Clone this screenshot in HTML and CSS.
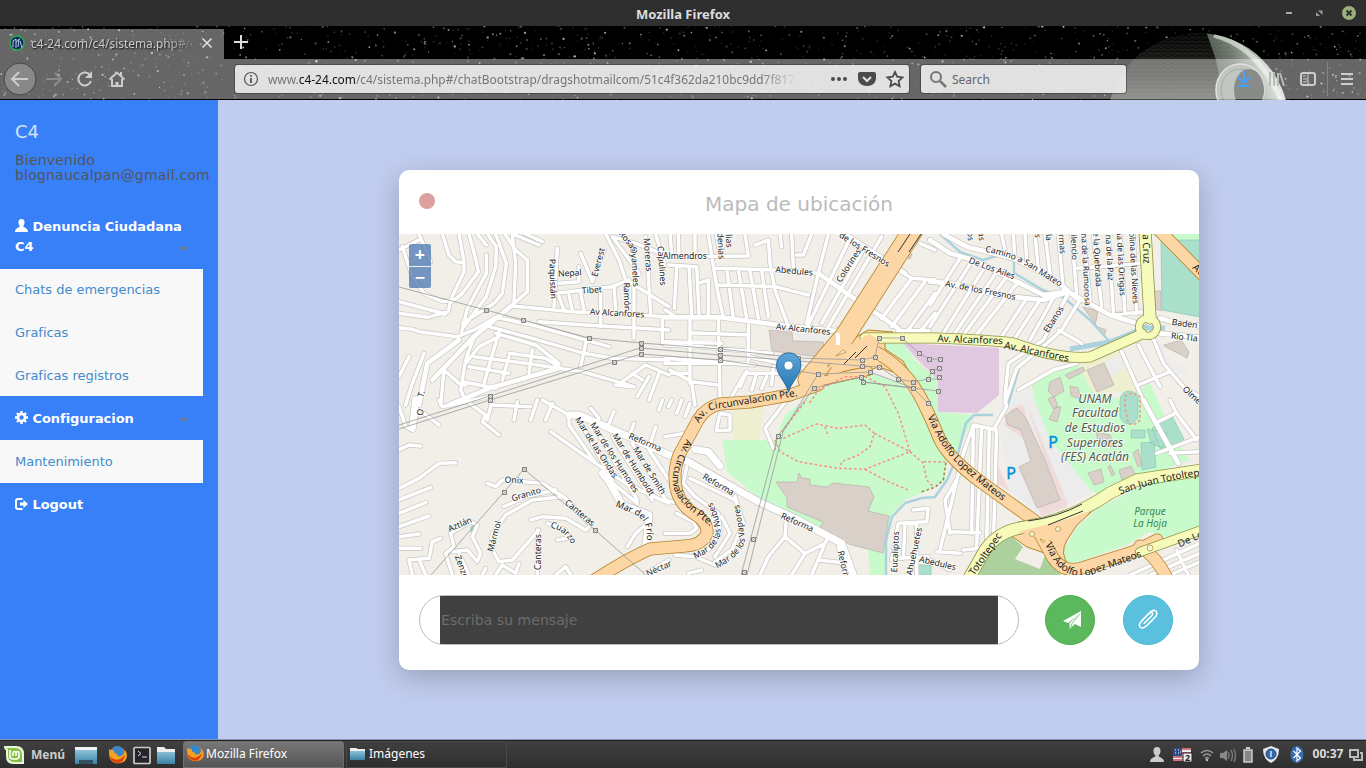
FILE: index.html
```html
<!DOCTYPE html>
<html lang="es">
<head>
<meta charset="utf-8">
<title>Mozilla Firefox</title>
<link rel="stylesheet" href="styles.css">
</head>
<body>
<header class="titlebar">
  <span class="title">Mozilla Firefox</span>
  <svg class="winbtns" width="80" height="26"><path d="M0 13h6" stroke="#aaa" stroke-width="2"/><path d="M32 10.500h4.500v4.500zM34 16h-4v-4z" fill="#999"/><circle cx="63" cy="13" r="7" fill="#9ab07c"/><path d="m60.500 10.500 5 5m0-5-5 5" stroke="#2f2f2f" stroke-width="2"/></svg>
</header>
<section class="chrome">
  <svg class="sky" width="1366" height="74" id="sky">
    <defs>
      <linearGradient id="lit" gradientUnits="userSpaceOnUse" x1="1205" y1="60" x2="1280" y2="30"><stop offset="0" stop-color="#3a3f39"/><stop offset=".45" stop-color="#6f786e"/><stop offset="1" stop-color="#f0f6ee"/></linearGradient>
      <linearGradient id="dark" gradientUnits="userSpaceOnUse" x1="0" y1="8" x2="0" y2="74"><stop stop-color="#060606"/><stop offset=".6" stop-color="#22241f"/><stop offset="1" stop-color="#474b44"/></linearGradient>
      <pattern id="panel" width="7" height="4" patternUnits="userSpaceOnUse"><path d="M0 3.500h5M6 0v2" stroke="#b6beb4" stroke-opacity=".1" stroke-width="1"/></pattern>
      <clipPath id="sphere"><circle cx="1198" cy="98" r="91"/></clipPath>
    </defs>
    <rect width="1366" height="74"/>
    <g id="stars" fill="#fff"></g>
    <g clip-path="url(#sphere)">
      <path d="M1107 0h190v74h-190z" fill="url(#dark)"/>
      <path d="M1204 0q8 22 12 34l8 40h70V0z" fill="url(#lit)"/>
      <path d="M1107 0h190v74h-190z" fill="url(#panel)"/>
      <path d="M1214 9q46 12 69 70" fill="none" stroke="#eef5ec" stroke-width="5" opacity=".6"/>
    </g>
    <ellipse cx="1240" cy="64" rx="24" ry="26" fill="#9aa198" stroke="#c8cec6" stroke-width="1.500"/>
    <ellipse cx="1240" cy="64" rx="19" ry="21" fill="none" stroke="#6c726b"/>
    <ellipse cx="1249" cy="64" rx="15" ry="21" fill="#3b3e39"/>
  </svg>
  <div class="tabs">
    <div class="tab">
      <svg width="16" height="16"><circle cx="8" cy="8" r="7" fill="#12275a" stroke="#22b04c" stroke-width="1.500"/><path d="M4 12V6l3-2v9m2-1 1-8m1 2 2 7M7 7l4-3" stroke="#b6d4ee" fill="none" stroke-width="1"/></svg>
      <span class="tabtext">c4-24.com/c4/sistema.php#/chat</span>
      <svg width="12" height="12"><path d="m1.500 1.500 9 9m0-9-9 9" stroke="#ddd" stroke-width="1.700"/></svg>
    </div>
    <svg class="plus" width="16" height="16"><path d="M8 1v14M1 8h14" stroke="#ddd" stroke-width="2"/></svg>
  </div>
  <div class="nav">
    <svg class="navicons" width="235" height="40" fill="none" stroke="#ccc" stroke-width="2">
      <circle cx="20" cy="20" r="16" fill="#888" stroke="#454545" stroke-width="1"/>
      <path d="M28 20H13m6-7-7 7 7 7"/>
      <path d="M46 20h14m-5-6 6 6-6 6" stroke="#8b8b8b"/>
      <path d="M90 16a6.500 6.500 0 1 0 1 6" /><path d="M92 12v7h-7z" fill="#ccc" stroke="none"/>
      <path d="m109.500 20.500 7.500-7 7.500 7M112 20v7h10v-7M121 17v-4"/><path d="M117 28v-5" stroke-width="3"/>
    </svg>
    <div class="url">
      <svg width="16" height="16" fill="none" stroke="#555"><circle cx="8" cy="8" r="6.500" stroke-width="1.200"/><path d="M8 7v5M8 4v1.800" stroke-width="1.800"/></svg>
      <span class="address">www.<b>c4-24.com</b>/c4/sistema.php#/chatBootstrap/dragshotmailcom/51c4f362da210bc9dd7f817a</span>
      <svg class="urlicons" width="74" height="18"><g fill="#4b4b4b"><circle cx="3" cy="9" r="2"/><circle cx="9" cy="9" r="2"/><circle cx="15" cy="9" r="2"/><path d="M30 2h14q2 0 2 2v4c0 5-4 8-9 8s-9-3-9-8V4q0-2 2-2"/></g><path d="m33 7 4 4 4-4" fill="none" stroke="#e2e2e2" stroke-width="2"/><path d="m65 2 2.200 4.700 5.300.7-3.900 3.600 1 5.200-4.600-2.600-4.600 2.600 1-5.200-3.900-3.600 5.300-.7z" fill="none" stroke="#4b4b4b" stroke-width="1.800"/></svg>
    </div>
    <div class="search">
      <svg width="18" height="18" fill="none" stroke="#777" stroke-width="2"><circle cx="7" cy="7" r="5"/><path d="m11 11 6 6" stroke-width="2.500"/></svg><span>Search</span>
    </div>
    <svg class="tools" width="140" height="40" fill="none" stroke="#ccc" stroke-width="2">
      <path d="M18 12v12m-6-6 6 6 6-6M12 27h12" stroke="#45a1ff"/>
      <path d="M44 13v14M48 13v14M52 14v13M54 14l4 13" stroke="#b9b9b9"/>
      <rect x="75" y="14" width="14" height="12" rx="2"/><path d="M82 14v12M77 17h3m-3 3h3m-3 3h3" stroke-width="1"/>
      <path d="M101.500 3v34" stroke="#858585" stroke-width="1"/>
      <path d="M115 15h12m-12 5h12m-12 5h12"/>
    </svg>
  </div>
</section>

<main class="page">
  <aside class="sidebar">
    <div class="brand">C4</div>
    <div class="welcome">Bienvenido<br>blognaucalpan@gmail.com</div>
    <nav class="menu">
      <a class="head tall"><svg width="13" height="13" viewBox="0 0 13 13"><path d="M6.500 0C9 0 9.800 2 9.500 4c-.2 1.600-1 2.500-1.200 3 0 2 4.700 1.500 4.700 6H0c0-4.500 4.700-4 4.700-6C4.500 6.500 3.700 5.600 3.500 4 3.200 2 4 0 6.500 0" fill="#fff"/></svg> Denuncia Ciudadana C4<i class="caret"></i></a>
      <a class="item">Chats de emergencias</a>
      <a class="item">Graficas</a>
      <a class="item last">Graficas registros</a>
      <a class="head"><svg width="13" height="13" viewBox="0 0 13 13"><circle cx="6.500" cy="6.500" r="3.500" fill="none" stroke="#fff" stroke-width="2.600"/><path d="M6.500 0v2m0 9v2M0 6.500h2m9 0h2M2 2l1.300 1.300m6.400 6.400L11 11M2 11l1.300-1.300m6.400-6.400L11 2" stroke="#fff" stroke-width="2.400"/></svg> Configuracion<i class="caret"></i></a>
      <a class="item">Mantenimiento</a>
      <a class="head"><svg width="13" height="12" viewBox="0 0 13 12"><path d="M7.500 1H3Q1 1 1 3v6q0 2 2 2h4.500" fill="none" stroke="#fff" stroke-width="2"/><path d="M5 4.500h3.500V2L13 6l-4.500 4V7.500H5z" fill="#fff"/></svg> Logout</a>
    </nav>
  </aside>
  <section class="content">
    <div class="card">
      <div class="cardhead"><span class="dot"></span><h1>Mapa de ubicación</h1></div>
      <div class="mapbox">
      <svg class="map" width="800" height="341" viewBox="399 234 800 341">
        <defs>
          <g id="streets">
            <g transform="translate(399 230) scale(.33333)">
              <path d="M0 60 60 30M10 50 40 140 75 190 130 215 160 212M60 12 95 95M130 12 150 75 170 95 195 98M180 12 195 95V125L155 210 148 245 85 262 0 250M0 215 140 252M210 12 232 95 238 125 190 190 160 215M235 12 262 45M262 75V130L235 180 205 235 188 305M265 12 292 50 290 110 262 200 195 290M290 12 322 100 310 190 285 220 190 280M318 12 350 60 385 90V185L340 225M340 15 350 100 345 215M340 12 420 45M380 12 430 35M340 228 520 245 810 260M420 275 560 285 810 300M0 293 40 298 60 305 175 320 225 300 290 262M290 262 400 285 630 350M270 290 400 325 555 370 640 385 810 390M290 310 410 345 480 400M225 380 380 400 550 425 705 470M560 340 545 410M300 305 255 460M330 380 310 450M75 370 40 460 20 525M30 380 0 440M225 320 200 390 185 480 195 500M210 410 330 430M190 455 290 475M300 320 240 350 200 400M400 360 390 430M135 420 180 460 200 465M135 420 125 525M330 370 440 385 480 410"/>
              <path d="M475 55 465 230M480 160 540 155V110M545 70 580 155 615 60M470 190 640 170 690 150M620 12 660 90 680 150 730 180 810 230M640 20 720 130M705 160V325M740 20 755 250M770 12 790 80M790 260V340M645 170 650 240M605 180V290M480 200 495 240M510 195 520 240M545 190 555 240M640 20 710 40 810 80M670 455 740 405 810 435M715 500 750 440M700 430 730 450M750 510 780 430M650 465 700 470"/>
              <path class="avenue" d="M150 525 270 475 480 415M340 225 225 320 100 450M180 330 85 400 60 525"/>
            </g>
            <g transform="translate(665 230) scale(.33333)">
              <path d="M10 105 95 110M35 115 28 235M72 110 80 255M95 110 102 250M100 160 130 150V255M15 12 20 70M40 12 42 80M90 12V75M0 80 250 78 240 12M130 12 145 110 160 195 175 262M155 12 165 75M150 115 340 120 460 130M155 165 330 170 430 195M185 115 205 265M220 120 245 265M255 125 280 265M290 120 310 260M270 45 310 30 315 100 330 180 370 290M345 12 350 50M380 15 385 110M395 75H415L440 12M75 265V460M160 265 165 500M250 285V390M0 335 170 340M75 308 250 315M0 345 100 350 320 370M0 385 270 405M250 380 440 420M0 240 30 258M490 12 460 130 425 280M555 25 430 285M600 50 470 280M650 20 490 290M700 120 740 145 810 150M740 145 650 265M780 155 680 290M810 190 730 300M810 250 765 305M765 40 810 60M240 430H360L440 440M225 470 245 425M260 480 275 430M290 475 305 440M325 410 320 465M15 420 80 455 160 465M20 430H75M200 500 240 430M0 400 250 400M80 460 90 525"/>
              <path class="avenue" d="M0 262H170L340 285 530 305M460 130 560 200 700 295M540 12 720 130M520 300V345M700 303H790"/>
            </g>
            <g transform="translate(930 230) scale(.33333)">
              <path d="M90 85 0 225M125 95 0 290M165 110 40 310M200 125 75 310M230 140 100 315M265 155 135 320M290 205 215 320M330 210 255 325M375 195 300 330M415 190 340 330 235 400 225 500M385 300 455 340M215 12 225 60M250 12 255 90M285 12 290 90M315 12 325 120M345 12 360 130M385 12 400 180M425 12 440 195M460 12 480 210M490 12 515 230M535 12 550 245M570 12 585 250M610 12 620 250M440 115 630 100M540 255 645 245M575 365 635 500M625 345 690 470M670 325 700 400 760 470 810 500M625 465 720 425M265 480 370 420 440 400M450 210 395 300 345 345 260 415 225 520"/>
              <path class="avenue" d="M0 30 60 70 130 90 260 155 340 195 415 185 450 205 540 255 620 280M0 155 60 160 200 195 340 210 415 185M40 12 110 50 250 85 340 130 400 170 440 205M690 265 740 280 810 287M690 310 810 322"/>
            </g>
            <g transform="translate(399 400) scale(.33333)">
              <path class="wide" d="M50 0 40 85M510 45 540 45 690 110 810 165M610 220 630 245 670 315 750 345 745 400 740 435"/>
              <path d="M75 40 120 75M0 20 20 80 40 90M120 0 130 20 270-10M205 5 260 45 250 65 300 105M275 15 395 20M280 0 265 60M355 5 345 60M415 0 395 60M460 10 440 60M430 0 510 45 510 75 590 190M455 95 590 190 680 250 810 310M540 60 640 240M585 80 715 300M640 110 760 300M700 130 800 300M750 150 810 240M630 240 715 310M600 55 575 25M630 70 645 35M690 110 705 70M770 80 755 130M780 30 790 0M0 150 30 135 65 138M0 265 60 235 120 190 170 188M0 300 95 262M0 340 80 308M0 380 90 348M0 410 60 402M0 445H65M265 250 290 260 310 240 430 250 500 295 575 375 560 390 500 355 430 350 395 360M315 320 380 290 470 270M490 290 400 300 320 345 280 400 275 440 300 485 340 480 420 390M415 390V525M445 370 500 390 505 415 475 420M155 400 165 440 140 460 160 525M155 400 215 365 235 375 220 410 245 460 235 485 205 450 160 455M180 460 210 525M40 525 30 480 90 475 100 425 125 415M60 478 80 525M685 440 710 400 745 370M250 525 260 505M290 525 310 495 350 520 360 490M470 525 500 500 515 525M740 520 810 480"/>
            </g>
            <g transform="translate(665 400) scale(.33333)">
              <path class="wide" d="M0 160 70 185 280 305 390 355 530 430 565 525M90 148 130 155 165 198"/>
              <path d="M10 20 20 0M35 40 50 0M60 50 75 10M155 85 165 40 195 45V90L155 92M0 110 60 100 75 120M365 0 300 85 325 145M65 200 55 250 90 290 160 340 165 400 130 450M75 235 210 300 225 330M210 290 235 370 200 450 150 485M170 350 195 400 150 470M35 340 85 365 95 385 75 400H0M0 300 40 310M30 465 90 470 150 495M70 520 110 510M365 345 360 410 420 460 480 430 490 410M360 410 310 470 285 525M420 460 380 525M480 430 440 525M460 480 550 490M520 440 540 525M745 330 790 325 785 365 700 370 680 480M720 370 715 475M755 370V525M700 475 790 470"/>
            </g>
            <g transform="translate(930 400) scale(.33333)">
              <path d="M130 75 100 160 30 450M130 75 200 90 190 440 100 450M155 80 140 440M178 85 170 430M130 85 125 400M60 395 150 398M80 240 45 300 60 400M20 455 90 460M190 90 230 20 225 0M685 65 735 40M680 160 810 110M720 160 810 155M720 0 740 40 800 120M600 525 810 430M660 525 810 460M720 525 810 485M740 450 775 525M0 480 60 510"/>
              <path class="avenue" d="M640 0 745 190"/>
            </g>
          </g>
          <g id="orange">
            <path class="w13" d="M818 385 790 395 750 402 720 404Q706 407 698 420L679 455Q672 475 677 492 682 507 696 515 708 523 707 533 703 545 685 546L650 549Q625 560 590 583"/>
            <path class="w21" d="M913 230 845 336 808 380"/>
            <path class="w10" d="M812 383 868 371"/>
            <path class="w13" d="M872 350Q905 367 922 400 932 420 940 440 950 460 985 485L1035 521"/>
            <path class="w13" d="M1035 525 1053 558Q1065 575 1085 567L1133 552 1157 540M1140 546Q1160 560 1170 585M1157 228 1205 277"/>
          </g>
          <g id="yellow">
            <path class="w11" d="M865 338 935 338Q990 340 1013 343 1060 360 1090 357L1142 334"/>
            <path class="w13" d="M1145 230 1150 318"/><circle class="w8" cx="1148" cy="327" r="9"/>
            <path class="w13" d="M967 582 985 550Q998 532 1020 528L1045 523Q1080 514 1110 493L1137 480 1202 470"/>
            <path class="w10" d="M1140 552 1202 530"/>
          </g>
          <path id="camino" d="M973 250Q1008 254 1030 268T1070 293"/>
          <path id="circ1" d="M697 428Q705 408 722 408L810 394"/>
          <path id="circ2" d="M691 431C676 458 666 480 678 497S702 516 716 533"/>
          <path id="via1" d="M925 411Q937 440 950 456 970 478 1010 506"/>
          <path id="via2" d="M1042 534C1052 570 1070 582 1096 573L1152 553"/>
          <path id="juan" d="M1110 499Q1145 482 1215 474"/>
          <path id="frio" d="M612 505 634 514Q650 521 646 544"/>
          <path id="nubes" d="M690 561Q724 548 720 526 718 512 709 497"/>
          <path id="vapores" d="M712 571Q744 556 745 538L738 499"/>
          <path id="cuarzo" d="M542 527Q566 526 575 552"/>
        </defs>
        <rect x="399" y="234" width="800" height="341" fill="#f2efe9"/>
        <path fill="#c8facc" d="M722 440 775 440 785 415 812 395 838 377 870 373 900 383 920 405 932 435 947 460 945 480 925 492 905 500 893 512 888 530 885 575H870L868 550 850 545 820 528 795 515 758 497 727 472zM885 343H903L915 360 938 380 940 412 975 415 965 435 955 455 945 445 930 405 905 372 884 355zM1031 382 1077 363 1090 388 1120 400 1150 383 1175 440 1190 460 1140 478 1100 495 1090 490 1050 440 1040 425z"/>
        <path fill="#c8facc" d="m1062 553 15-26 20-18 47-24 55-12v53l-23 14-27-8-20 12-57 20q-13 1-10-11M1150 234h50v27z"/>
        <path fill="#e0c9e0" d="M903 343 999 348V395L977 413 938 412V380L915 357z"/>
        <path fill="#eeeed0" d="M733 406h31l-5 34h-26zM1077 363l45-12 15 40-43 3z"/>
        <path fill="#ececec" d="m1000 430 14-32 16-10 20 52 42 52-48 26-34-28zM1105 361l15-6 5 13-15 8zM795 332l42 2-12 14-28-3zM1160 340l12 28 14-4 2 8-10 3-21-25z"/>
        <path fill="#f1dada" d="m1004 425 6-16 12-5 4 8-4 26zM998 465l12 27-12-8zM1038 505l24-6 5 8-26 10zM1026 404l6 12 36 88-6 2z"/>
        <path fill="#add19e" d="m993 543 17-8 13 12-8 12 25 10 5-14 18 22h-85z"/>
        <g fill="#d9d0c9" stroke="#bcb0a7" stroke-width=".7">
          <path d="M776 482h21l2-9 3 5 8 1v6l17 2 6-4 36 4 5 10-6 14 21 5-6 37-34-9-30-15 4-7-36-15v-9zM769 330l23 2 1 9 30 1 4 16-55-7zM1005 416l12-8 9 10 19 42 15 40-23 8-18-41 12-6-10-31-13-5zM1087 370l17-7 10 22-17 7zM1083 307l15 4-3 15 11 4-2 6zM1164 345l17-5 8 12-2 6-23-12z"/>
          <path d="m1050 382 10-5 4 14-10 6-6-6zM1065 375l18-8 2 4-16 8zM1070 386l8 2 3 11-10-3zM1048 399l6-3 4 11-5 2zM1088 473l13-4 3 13-10 3zM1096 432l14 3 4 12-15-2zM1119 470l12-4 5 10-14 4zM1133 453l5-4 4 16-4 2zM905 250l7 4-2 5-6-3zM1152 291h9v20l-7-3zM1056 407h5l-4 15-8-3zM1110 465l5 9-3 2-4-9z"/>
        </g>
        <g fill="#aae0cb" stroke="#88c9af" stroke-width=".7"><path d="M1161 240h39v77l-38-7zM1152 428l20-12 12 23-22 14zM1131 430l14 0 0 8-14 0zM1141 443l13-1 2 25-14 3zM1147 429l20 4-4 15-12-4zM917 565h14v10h-14zM471 527l3-3 2 2-5 6z"/><rect x="1120" y="391" width="18" height="33" rx="9"/></g>
        <g fill="none" stroke="#aad3df">
          <path stroke-width="2.500" d="M940 234 960 252 983 260 1000 255 1014 257V273L1043 290 1063 297 1090 320 1110 342 1147 325M886 575V540L892 517 905 503 922 498 935 497 947 480 957 457 966 423 974 415 993 415M1020 365 1008 405"/>
          <path stroke-width="5" d="M1070 349 1110 342 1130 334 1145 328H1165"/>
        </g>
        <use href="#streets" class="road street-case"/>
        <use href="#streets" class="road street-fill"/>
        <path fill="#fcd6a4" stroke="#b5852c" stroke-width="1" d="m836 350 22-14 10-6 25 2-8 8v9l18 12 10 18-34-12-52 16-15 3z"/>
        <path fill="#fcd6a4" stroke="#b5852c" stroke-width="1" d="m1010 535 60-17 29-13-22 20-10 15q-8 14 2 25l-22-11-20-7z"/>
        <use href="#orange" class="road orange-case"/><use href="#orange" class="road orange-fill"/>
        <use href="#yellow" class="road yellow-case"/><use href="#yellow" class="road yellow-fill"/>
        <path fill="#fcd6a4" d="m838 352 22-13 9-5 10 6-1 12 14 10-26-3-39 20zM1018 532l50-13 24-9-20 17-12 15-20-4z"/>
        <g fill="none" stroke="#333"><path d="m856 352-12 12M867 346l-12 12M1028 521q30-4 54-17M1048 525l35-14M910 234l-12 18M921 234l-12 18"/></g>
        <g fill="#eff5d5" stroke="#b5852c" stroke-width=".7"><circle cx="1032" cy="534" r="2.500"/><circle cx="1058" cy="529" r="2.500"/><circle cx="1150" cy="548" r="3"/><path d="m836 356 7-6 3 2zM1043 543l-3-4 5 2zM827 366l3-3-1 4z"/></g>
        <path d="M838 333v12" stroke="#fff" stroke-width="4"/>
        <g transform="translate(665 400) scale(.33333)" fill="none" stroke="#fa8f80" stroke-width="4.500" stroke-dasharray="8 7">
          <path d="M355 115 400 95 455 72 520 85 600 75 628 100 615 140 580 165 530 185 525 205 600 208 735 155M330 120 345 155 400 185 520 205M600 208 670 245 730 270M628 100 735 155 700 40 680 0 660-40 600-70 540-70 460-30 430 15M735 155 775 190 785 240 805 260M775 185H840M480 80 490 110M330 150 335 115 425 0"/>
          <path stroke="#9a8740" d="M770 275 810 262 835 240 843 185"/><path d="M1380 20V-10Q1400-30 1425-10V60Q1410 80 1390 70z"/>
        </g>
        <g class="power">
          <path d="M399 287 486 310 523 320 589 338 641 343 720 349 798 358 862 360 875 357 879 338H902L919 353 929 359H940M641 348 720 355 862 366 879 367 898 379 913 382 928 379 932 371 939 368M641 354 720 360 818 374 870 372 913 388 928 403M640 348 490 396 399 425M614 362 490 400 399 429M641 354 614 362M818 374 783 432 747 575M814 388 778 436 741 575M814 388 861 377 863 382 913 388M863 382 938 391M928 379H939M431 575 504 492 524 469 595 530 646 575"/>
        </g>
        <g fill="none" stroke="#777" stroke-width=".9" id="towers"></g>
        <g class="lbl">
          <text transform="translate(570 276) rotate(-4)">Nepal</text><text transform="translate(550 279) rotate(88)">Paquistán</text><text transform="translate(601 263) rotate(-75)">Everest</text><text transform="translate(592 293) rotate(-4)">Tibet</text><text transform="translate(624 297) rotate(88)">Ramón</text><text transform="translate(617 316) rotate(3)">Av Alcanfores</text><text transform="translate(632 267) rotate(86)">Oyameles</text><text transform="translate(626 243) rotate(50)">Rosas</text><text transform="translate(645 255) rotate(86)">Moreras</text><text transform="translate(659 266) rotate(86)">Capulines</text>
          <text transform="translate(424 395) rotate(-70)">T.</text><text transform="translate(423 413) rotate(-75)">O</text>
          <text x="685" y="259">Almendros</text><text transform="translate(718 246) rotate(87)">denias</text><text transform="translate(726 241) rotate(87)">lias</text><text transform="translate(794 274) rotate(5)">Abedules</text><text transform="translate(851 267) rotate(-57)">Colorines</text><text transform="translate(863 252) rotate(32)">de los Fresnos</text><text transform="translate(803 332) rotate(6)">Av Alcanfores</text>
          <text transform="translate(991 271) rotate(20)">De Los Ailes</text><text transform="translate(980 293) rotate(11)">Av. de los Fresnos</text><text transform="translate(1056 321) rotate(-57)">Ebanos</text>
          <g class="end"><text transform="translate(968 241) rotate(87)">os</text><text transform="translate(979 241) rotate(87)">as</text><text transform="translate(1035 238) rotate(87)">s</text><text transform="translate(1046 241) rotate(87)">la</text><text transform="translate(1060 254) rotate(86)">rmas</text><text transform="translate(1072 260) rotate(87)">ilencio</text><text transform="translate(1085 306) rotate(87)">ina de la Rumorosa</text><text transform="translate(1096 287) rotate(87)">e la Quebrada</text><text transform="translate(1108 281) rotate(87)">na de la Paz</text><text transform="translate(1120 296) rotate(87)">na de las Ortigas</text><text transform="translate(1133 304) rotate(87)">olina de las Nieves</text></g>
          <text transform="translate(1188 327) rotate(8)">Baden P</text><text transform="translate(1184 340) rotate(6)">Rio Tla</text><text transform="translate(1192 399) rotate(42)">Olmed</text>
          <text><textPath href="#camino" startOffset="50%">Camino a San Mateo</textPath></text>
          <text transform="translate(514 483) rotate(3)">Onix</text><text transform="translate(527 497) rotate(-17)">Granito</text><text transform="translate(578 515) rotate(40)">Canteras</text><text transform="translate(461 527) rotate(-23)">Aztlán</text><text transform="translate(497 537) rotate(-75)">Mármol</text><text transform="translate(541 552) rotate(-90)">Canteras</text><text transform="translate(459 568) rotate(70)">Zenzo</text><text><textPath href="#cuarzo" startOffset="50%">Cuarzo</textPath></text>
          <text transform="translate(594 449) rotate(57)">Mar de las Ondas</text><text transform="translate(612 459) rotate(57)">Mar de los Humores</text><text transform="translate(631 466) rotate(58)">Mar de Humboldt</text><text transform="translate(647 472) rotate(58)">Mar de Smith</text><text transform="translate(644 445) rotate(23)">Reforma</text><text transform="translate(717 487) rotate(30)">Reforma</text><text transform="translate(796 525) rotate(24)">Reforma</text><text transform="translate(841 566) rotate(77)">Reform</text><text transform="translate(660 571) rotate(-24)">Néctar</text>
          <text class="mid"><textPath href="#frio" startOffset="50%">Mar del Frío</textPath></text><text><textPath href="#nubes" startOffset="50%">Mar de las Nubes</textPath></text><text><textPath href="#vapores" startOffset="50%">Mar de los Vapores</textPath></text>
          <text transform="translate(898 552) rotate(-87)">Eucaliptos</text><text transform="translate(917 552) rotate(-78)">Ahuehuetes</text><text transform="translate(937 566) rotate(13)">Abedules</text>
          <g class="big"><text transform="translate(970 343) rotate(2)">Av. Alcanfores</text><text transform="translate(1036 355) rotate(12)">Av. Alcanfores</text><text transform="translate(1143 249) rotate(88)">a Cruz</text><text><textPath href="#circ1" startOffset="47%">Av. Circunvalacion Pte.</textPath></text><text><textPath href="#circ2" startOffset="50%">Av. Circunvalacion Pte.</textPath></text><text><textPath href="#via1" startOffset="49%">Vía Adolfo Lopez Mateos</textPath></text><text><textPath href="#via2" startOffset="50%">Vía Adolfo Lopez Mateos</textPath></text><text><textPath href="#juan" startOffset="53%">San Juan Totoltepec</textPath></text><text transform="translate(988 556) rotate(-55)">Totoltepec</text><text transform="translate(1194 541) rotate(-24)">De Los</text><text transform="translate(1196 272) rotate(42)">Av</text></g>
          <g class="campus"><text x="1095" y="403">UNAM</text><text x="1095" y="417">Facultad</text><text x="1095" y="432">de Estudios</text><text x="1095" y="447">Superiores</text><text x="1095" y="461">(FES) Acatlán</text></g>
          <g class="park"><text x="1150" y="515">Parque</text><text x="1150" y="527">La Hoja</text></g>
          <g class="parking"><text x="1053" y="448">P</text><text x="1011" y="479">P</text></g>
        </g>
        <defs><linearGradient id="pin" x2="0" y2="1"><stop stop-color="#5da7dc"/><stop offset="1" stop-color="#2673ae"/></linearGradient></defs>
        <path d="M788.500 392C786 382 776.500 375 776.500 365a12.200 12.200 0 0 1 24.500 0C801 375 791 382 788.500 392" fill="url(#pin)" stroke="#2e6c97" stroke-width="1"/><circle cx="788.500" cy="365.500" r="4.500" fill="#fff" stroke="#2e6c97" stroke-width=".6"/>
      </svg>
      <div class="zoom"><span>+</span><span>−</span></div>
      </div>
      <div class="compose">
        <div class="msg"><span>Escriba su mensaje</span></div>
        <div class="btn send"><svg width="18" height="18" viewBox="0 0 18 18"><path d="M18 0v16l-6-3-5.500 5v-6L15 4 5 12l-5-2z" fill="#fff"/><path d="m7.500 16.500 1.500-4 8-10" fill="none" stroke="#5cb85c" stroke-width=".8"/></svg></div>
        <div class="btn clip"><svg width="22" height="22" viewBox="0 0 22 22"><path d="m7 15 7.500-7.500q2-2 .7-3.200-1.400-1-3 .7L4.500 12.700q-3.600 3.500-1.200 6 2.500 2.200 6-1.200l8.700-8.700q3.300-3.600 1-6-2.500-2.300-6 1L5 11.700M9.500 17.500l6-6" transform="translate(0 -.5)" fill="none" stroke="#fff" stroke-width="1.500" stroke-linecap="round"/></svg></div>
      </div>
    </div>
  </section>
</main>

<footer class="taskbar">
  <svg class="launch" width="182" height="28">
    <defs><linearGradient id="fold" x2="0" y2="1"><stop stop-color="#9ed0e5"/><stop offset="1" stop-color="#3c83a7"/></linearGradient><g id="ff"><circle cx="8.500" cy="9" r="8.500" fill="#ef7a13"/><circle cx="8.500" cy="6.500" r="6.500" fill="#3a86cc"/><path d="M0 3q3 2 5 1-1 3 3 4 0 3 4 2 3-1 4-6 4 6 0 11-6 4-11 0-5-4-5-12" fill="#f4a321"/><path d="M1 10q7 8 15-1-1 7-7 8-6 0-8-7" fill="#d9440e"/></g></defs>
    <path d="M4 5h12q8 0 8 8v10H13q-7 0-7-8V9q-2 0-2-4" fill="#e9f5dc"/><path d="M6 7h9q7 0 7 7v7h-8q-6 0-6-7V8z" fill="#84c044"/><path d="M10 9v6q0 3 3 3h3q3 0 3-3v-3q0-1.500-1.500-1.500T16 12v3m0-3q0-1.500-1.500-1.500T13 12v3" fill="none" stroke="#fff" stroke-width="1.600"/>
    <rect x="75" y="6" width="22" height="17" fill="url(#fold)"/><path d="M75 6h22v3H75z" fill="#f2f2f2"/><path d="M79 19h14v4H79z" fill="#31525f"/>
    <use href="#ff" x="109" y="5"/>
    <rect x="134" y="6.500" width="16" height="16" rx="1" fill="#25232b" stroke="#ccc" stroke-width="1.700"/><path d="m138 10 3 2.500-3 2.500m4 1h5" fill="none" stroke="#ddd"/>
    <path d="M157 7h7l2 2h9v14h-18z" fill="url(#fold)"/><path d="M157 6h7l2 2h9v3h-18z" fill="#eee"/>
  </svg>
  <span class="menulabel">Menú</span>
  <div class="task active"><svg width="17" height="18"><use href="#ff" transform="scale(.93)"/></svg>Mozilla Firefox</div>
  <div class="task"><svg width="15" height="14"><path d="M0 2h15v11H0z" fill="url(#fold)"/><path d="M0 1h6l2 1h7v2H0z" fill="#eee"/></svg>Imágenes</div>
  <svg class="tray" width="160" height="28">
    <path d="M7 6c5 0 4 7 1.500 8.500 0 2.500 5.500 1.500 5.500 6.500H0c0-5 5.500-4 5.500-6.500C3 13 2 6 7 6" fill="#ccc"/>
    <path d="M23 7h18v13H23z" fill="#eee"/><path d="M23 8h18m-18 4h18m-18 4h18m-18 3h18" stroke="#c64b56" stroke-width="1.600"/><path d="M23 7h9v8h-9z" fill="#304b88"/><path d="M25 9h1m2 0h1m1 2h1m-6 1h1m2 0h1" stroke="#fff"/><rect x="33" y="12" width="9" height="9" fill="#eee" stroke="#222"/><text class="badge" x="35" y="20">2</text>
    <g fill="none" stroke="#999" stroke-width="1.500"><path d="M51 12q6-5 12 0M53 15q4-4 8 0M55 17.500q2-2 4 0"/><path d="m78 11q2 3 0 7M81 9q3 5 0 11M84 8q3 6 0 13" stroke="#777"/></g><circle cx="57" cy="19" r="1.300" fill="#bbb"/><path d="M70 12h3l4-3v11l-4-3h-3z" fill="#888"/>
    <rect x="94" y="9" width="8" height="12" fill="#888" stroke="#ccc" stroke-width="1.500"/><path d="M96 7h4" stroke="#ccc" stroke-width="2"/>
    <g transform="translate(7 0)"><path d="m114 5 8 3q0 10-8 14-8-4-8-14z" fill="#e6e6e6"/><circle cx="114" cy="13" r="5" fill="#326aab" stroke="#1d4b80"/><path d="M114 10v6" stroke="#d9e9ff" stroke-width="1.500"/>
    <ellipse cx="140" cy="13.500" rx="6.500" ry="8.500" fill="#366eb5"/><path d="m136.500 10 7 7-3.500 3V7l3.500 3-7 7" fill="none" stroke="#fff" stroke-width="1.200"/></g>
  </svg>
  <span class="clock">00:37</span>
  <svg class="win" width="18" height="28" fill="none" stroke="#bbb" stroke-width="2"><path d="M2 9h8v7H2zM12 12h2v7H6v-2"/></svg>
</footer>
<script src="scene.js"></script>
</body>
</html>
```
FILE: styles.css
```css
* { box-sizing: border-box; }
body { margin: 0; width: 1366px; height: 768px; overflow: hidden; display: flex; flex-direction: column; font-family: "DejaVu Sans", sans-serif; font-size: 13px; }
svg { display: block; flex: none; }
.titlebar { height: 26px; flex: none; background: #2f2f2f; color: #ddd; font: bold 13px/28px "Noto Sans", sans-serif; text-align: center; position: relative; }
.winbtns { position: absolute; right: 0; top: 0; }
.chrome { height: 74px; flex: none; position: relative; border-bottom: 1px solid #111; font-family: "Noto Sans", sans-serif; font-size: 12px; background: #000; }
.sky { position: absolute; left: 0; top: 0; }
.tabs { height: 33px; padding-top: 3px; display: flex; position: relative; }
.tab { width: 224px; height: 30px; background: rgba(255,255,255,.4); display: flex; align-items: center; padding: 0 11px 2px 9px; gap: 6px; color: #ccc; text-shadow: 1px 1px 2px #000; }
.tabtext { width: 165px; font-size: 11.900px; overflow: hidden; white-space: nowrap; -webkit-mask-image: linear-gradient(90deg, #000 82%, transparent); mask-image: linear-gradient(90deg, #000 82%, transparent); }
.plus { margin: 5px 0 0 9px; }
.nav { height: 40px; display: flex; align-items: center; position: relative; background: rgba(255,255,255,.4); }
.url, .search { height: 28px; background: rgba(238,238,238,.9); border-radius: 3px; display: flex; align-items: center; box-shadow: 0 0 0 1px rgba(50,50,50,.5); }
.url { width: 674px; padding: 0 5px 0 8px; }
.address { width: 530px; margin: 0 auto 0 9px; font-size: 11.900px; overflow: hidden; white-space: nowrap; color: #757575; -webkit-mask-image: linear-gradient(90deg, #000 93%, transparent 100%); mask-image: linear-gradient(90deg, #000 93%, transparent 100%); }
.address b { font-weight: 400; color: #111; }
.search { width: 205px; margin-left: 12px; padding-left: 8px; gap: 5px; color: #666; }
.tools { margin-left: 100px; }

.page { height: 640px; flex: none; display: flex; background: #c1cdef; border-bottom: 1px solid #8794ba; }
.sidebar { width: 218px; background: #3880f7; padding-top: 21px; }
.brand { padding-left: 15px; font-size: 18px; line-height: 22px; color: #d6e4fb; }
.welcome { margin: 10px 0 0 15px; font-size: 14px; letter-spacing: .2px; line-height: 15px; color: #555; }
.menu { margin-top: 23px; width: 203px; }
.menu a { display: block; padding: 11px 15px 12px; line-height: 20px; height: 43px; position: relative; }
.menu .head { color: #fff; font-weight: 700; font-size: 13px; letter-spacing: -.05px; }
.menu .head svg { display: inline-block; vertical-align: -1px; }
.menu .head:not(.tall) { height: 44px; padding-top: 12px; }
.menu .tall { height: 63px; }
.menu .item { background: #f8f8f8; color: #428bca; padding-top: 11px; letter-spacing: -.02px; }
.menu .last { height: 41px; }
.menu .last + .head { padding-top: 13px; }
.menu .head + .item { padding-top: 11px; }
.menu .head:not(.tall) + .item { padding-top: 12px; }
.caret { position: absolute; right: 15px; bottom: 18px; border: 4px solid transparent; border-top-color: #777; border-bottom: 0; }
.content { flex: 1; padding: 70px 0 0 181px; }
.card { width: 800px; height: 500px; border-radius: 10px; background: #fff; box-shadow: 0 8px 28px rgba(0,0,0,.22); overflow: hidden; }
.cardhead { height: 64px; position: relative; }
.cardhead h1 { margin: 0; font-weight: 400; font-size: 20px; line-height: 69px; text-align: center; color: #bbb; }
.dot { position: absolute; left: 20px; top: 23px; width: 16px; height: 16px; border-radius: 50%; background: #dda0a0; }
.mapbox { position: relative; height: 341px; }
.zoom { position: absolute; left: 10px; top: 10px; width: 22px; display: grid; gap: 1px; }
.zoom span { height: 22px; background: rgba(65,113,174,.72); color: #fff; font: bold 18px/21px "Noto Sans", sans-serif; text-align: center; }
.zoom span:first-child { border-radius: 2px 2px 0 0; }
.zoom span:last-child { height: 21px; border-radius: 0 0 2px 2px; }
.compose { height: 95px; display: flex; padding: 20px 0 0 20px; align-items: flex-start; }
.msg { width: 600px; height: 50px; border: 1px solid #bbb; border-radius: 25px; padding: 0 20px; margin-right: 26px; }
.msg span { display: block; background: #404040; height: 48px; line-height: 48px; color: #6c6c6c; font-size: 14px; padding-left: 1px; letter-spacing: .05px; }
.btn { width: 50px; height: 50px; border-radius: 50%; display: grid; place-items: center; border: 1px solid; }
.send { background: #5cb85c; border-color: #4cae4c; margin-right: 28px; padding-left: 3px; }
.clip { background: #5bc0de; border-color: #46b8da; }

/* Each road layer is drawn twice: a wide casing, then a fill reduced by --inset. */
.road { fill: none; stroke-linecap: round; stroke-linejoin: round; }
.street-case { --inset: 0px; stroke: #c6c4c1; }
.street-fill { --inset: 4px; stroke: #fff; }
.orange-case { --inset: 0px; stroke: #b5852c; }
.orange-fill { --inset: 1.600px; stroke: #fcd6a4; }
.yellow-case { --inset: 0px; stroke: #8f9640; }
.yellow-fill { --inset: 1.600px; stroke: #f6fabb; }
#streets path { stroke-width: calc(14.500px - var(--inset)); }
#streets .avenue { stroke-width: calc(18px - var(--inset)); }
#streets .wide { stroke-width: calc(25px - var(--inset)); }
.w8 { stroke-width: calc(8px - var(--inset)); }
.w10 { stroke-width: calc(10px - var(--inset)); }
.w11 { stroke-width: calc(11px - var(--inset)); }
.w13 { stroke-width: calc(13px - var(--inset)); }
.w21 { stroke-width: calc(21px - var(--inset)); }
.power { fill: none; stroke: #999; stroke-width: .8px; }
.lbl { font: 8.600px "Noto Sans", sans-serif; fill: #222; text-anchor: middle; stroke: #fff; stroke-opacity: .75; stroke-width: 1.800px; paint-order: stroke; }
.lbl .end { text-anchor: end; font-size: 8.300px; }
.lbl .mid { font-size: 9.200px; }
.lbl .big { font-size: 10px; stroke-opacity: 0; }
.lbl .campus { font-size: 12px; font-style: italic; fill: #55584a; }
.lbl .park { font-size: 10px; font-style: italic; fill: #3c8a55; stroke-opacity: 0; }
.lbl .parking { font-size: 16px; fill: #0092da; stroke: #0092da; stroke-opacity: 1; stroke-width: .4px; }

.taskbar { height: 28px; flex: none; display: flex; position: relative; background: linear-gradient(#404040, #2e2e2e); border-top: 1px solid #222; color: #fff; font: 12px/26px "Noto Sans", sans-serif; }
.menulabel { position: absolute; left: 31px; top: 1px; font-weight: 700; font-size: 12px; color: #ccc; }
.task { width: 161px; height: 27px; display: flex; align-items: center; gap: 4px; padding: 0 0 2px 3px; border: 1px solid #484848; border-radius: 3px 3px 0 0; }
.task + .task { margin-left: 2px; }
.task.active { background: linear-gradient(#777, #555); border-color: #707070; margin-left: 1px; gap: 2px; }
.tray { margin-left: auto; }
.badge { font: bold 9px "Noto Sans", sans-serif; fill: #222; }
.clock { width: 36px; text-align: center; font-weight: 700; color: #ddd; }
.win { margin-left: 2px; }
```
FILE: scene.js
```js
// Starfield behind the toolbar and power-line towers on the map.
const NS = 'http://www.w3.org/2000/svg';
let seed = 1977;
const rnd = () => (seed = (seed * 16807) % 2147483647) / 2147483647;
const stars = document.getElementById('stars');
for (let i = 0; i < 1400; i++) {
  const r = document.createElementNS(NS, 'circle');
  r.setAttribute('cx', rnd() * 1366);
  r.setAttribute('cy', rnd() * 74);
  r.setAttribute('r', .5 + rnd() * .7);
  r.setAttribute('opacity', .1 + Math.pow(rnd(), 2.5) * .6);
  stars.appendChild(r);
}

const towers = [[486,310],[523,320],[589,338],[641,343],[641,348],[641,354],[614,362],[490,396],[490,400],[720,349],[720,355],[720,360],[798,358],[862,360],[862,366],[875,357],[879,338],[902,338],[919,353],[929,359],[932,371],[928,379],[913,382],[898,379],[879,367],[870,372],[861,377],[863,382],[913,388],[928,403],[940,359],[939,368],[939,377],[938,391],[818,374],[814,388],[778,436],[753,539],[744,572],[524,469],[504,492],[595,530]];
document.getElementById('towers').innerHTML = towers.map(([x, y]) =>
  `<path fill="#f4f2ee" d="M${x - 1.5} ${y - 1.5}h4v4h-4z"/><path stroke-width=".5" d="M${x - 1.5} ${y - 1.5}l4 4m0-4-4 4"/>`).join('');
```
